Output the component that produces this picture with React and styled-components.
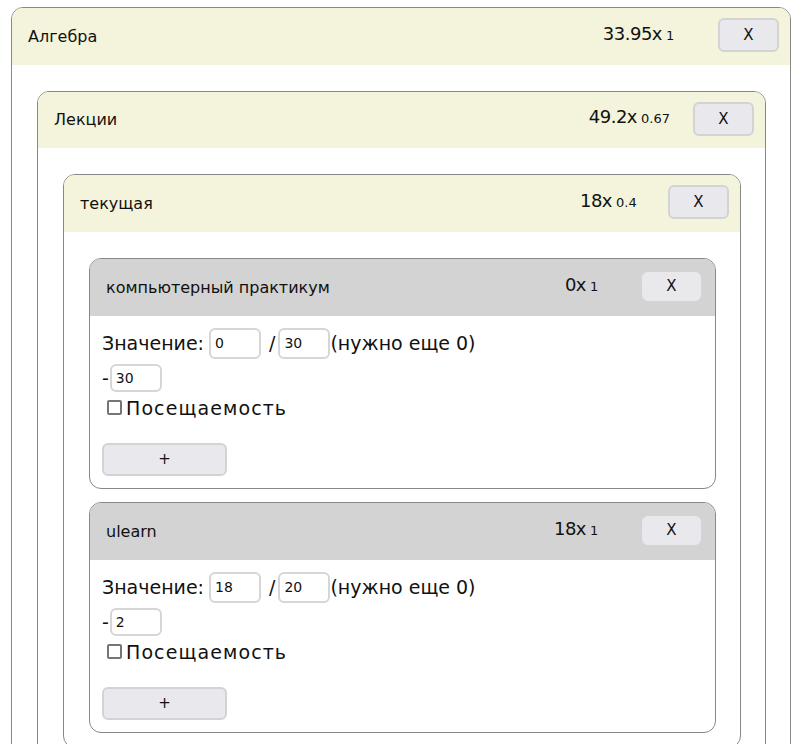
import React from "react";
import styled, { createGlobalStyle } from "styled-components";

const GlobalStyle = createGlobalStyle`
  body {
    margin: 0;
    padding: 7px 7px 0 11px;
    background: #ffffff;
    font-family: "DejaVu Sans", "Liberation Sans", sans-serif;
    color: #111;
    overflow: hidden;
    height: 744px;
    box-sizing: border-box;
  }
`;

const Card = styled.div`
  border: 1px solid #888;
  border-radius: 12px;
  background: #fff;
  overflow: hidden;
  margin-bottom: 13px;
`;

const Header = styled.div`
  display: flex;
  align-items: center;
  height: ${(p) => (p.$leaf ? "57px" : "56.5px")};
  padding: 0 ${(p) => (p.$leaf ? "14px" : "11px")} 0 16px;
  background: ${(p) => (p.$leaf ? "#d3d3d3" : "#f4f4dc")};
`;

const Title = styled.div`
  flex: 1;
  font-size: 16px;
`;

const Score = styled.div`
  font-size: 18px;
  margin-top: -6px;
  letter-spacing: -0.5px;
  white-space: nowrap;
`;

const Weight = styled.span`
  display: inline-block;
  width: 52px;
  font-size: 13px;
  margin-left: 4px;
  letter-spacing: 0;
`;

const Button = styled.button`
  width: ${(p) => p.$width || "61px"};
  height: ${(p) => p.$height || "34px"};
  background: #e9e9ed;
  border: 2px solid ${(p) => (p.$leaf ? "#e9e9ed" : "#d3d3d3")};
  border-radius: 6px;
  font-family: "DejaVu Sans", sans-serif;
  font-size: 15px;
  color: #111;
  padding: 0;
  margin-top: -2px;
`;

const Body = styled.div`
  padding: 26px 24px 1px 25px;
`;

const LeafBody = styled.div`
  padding: 12px 13px 12px 12px;
  font-size: 19px;
`;

const Row = styled.div`
  display: flex;
  align-items: center;
  height: ${(p) => p.$height || "31px"};
  margin-bottom: 5px;
`;

const Slash = styled.span`
  margin: 0 3px;
`;

const Num = styled.input`
  width: 52px;
  height: ${(p) => p.$height || "31px"};
  box-sizing: border-box;
  border: 2px solid #d6d6d6;
  border-radius: 6px;
  padding: 0 4px;
  font-family: "DejaVu Sans", sans-serif;
  font-size: 14px;
  color: #111;
  margin: 0 ${(p) => p.$gap || "0"};
`;

const CheckRow = styled.label`
  display: flex;
  align-items: center;
  gap: 4px;
  height: 18px;
  margin: 7px 0 28px 5px;
  letter-spacing: 1.1px;
`;

const Box = styled.span`
  width: 15px;
  height: 15px;
  border: 2px solid #767676;
  border-radius: 2px;
  box-sizing: border-box;
  display: inline-block;
`;

const groups = {
  title: "Алгебра",
  score: "33.95",
  weight: "1",
  children: [
    {
      title: "Лекции",
      score: "49.2",
      weight: "0.67",
      children: [
        {
          title: "текущая",
          score: "18",
          weight: "0.4",
          children: [
            { title: "компьютерный практикум", score: "0", weight: "1", value: "0", max: "30", diff: "30" },
            { title: "ulearn", score: "18", weight: "1", value: "18", max: "20", diff: "2" },
          ],
        },
      ],
    },
  ],
};

const Leaf = ({ item }) => (
  <Card>
    <Header $leaf>
      <Title>{item.title}</Title>
      <Score>
        {item.score}x<Weight>{item.weight}</Weight>
      </Score>
      <Button $leaf $height="29px" $width="59px">X</Button>
    </Header>
    <LeafBody>
      <Row>
        Значение:
        <Num defaultValue={item.value} $gap="5px" />
        <Slash>/</Slash>
        <Num defaultValue={item.max} />
        (нужно еще 0)
      </Row>
      <Row $height="28px">
        -<Num defaultValue={item.diff} $height="28px" $gap="1px" />
      </Row>
      <CheckRow>
        <Box />
        Посещаемость
      </CheckRow>
      <Button $width="125px" $height="33px">+</Button>
    </LeafBody>
  </Card>
);

const Group = ({ item }) => (
  <Card>
    <Header>
      <Title>{item.title}</Title>
      <Score>
        {item.score}x<Weight>{item.weight}</Weight>
      </Score>
      <Button>X</Button>
    </Header>
    <Body>
      {item.children.map((child, i) =>
        child.children ? <Group key={i} item={child} /> : <Leaf key={i} item={child} />
      )}
    </Body>
  </Card>
);

export default function App() {
  return (
    <>
      <GlobalStyle />
      <Group item={groups} />
    </>
  );
}
